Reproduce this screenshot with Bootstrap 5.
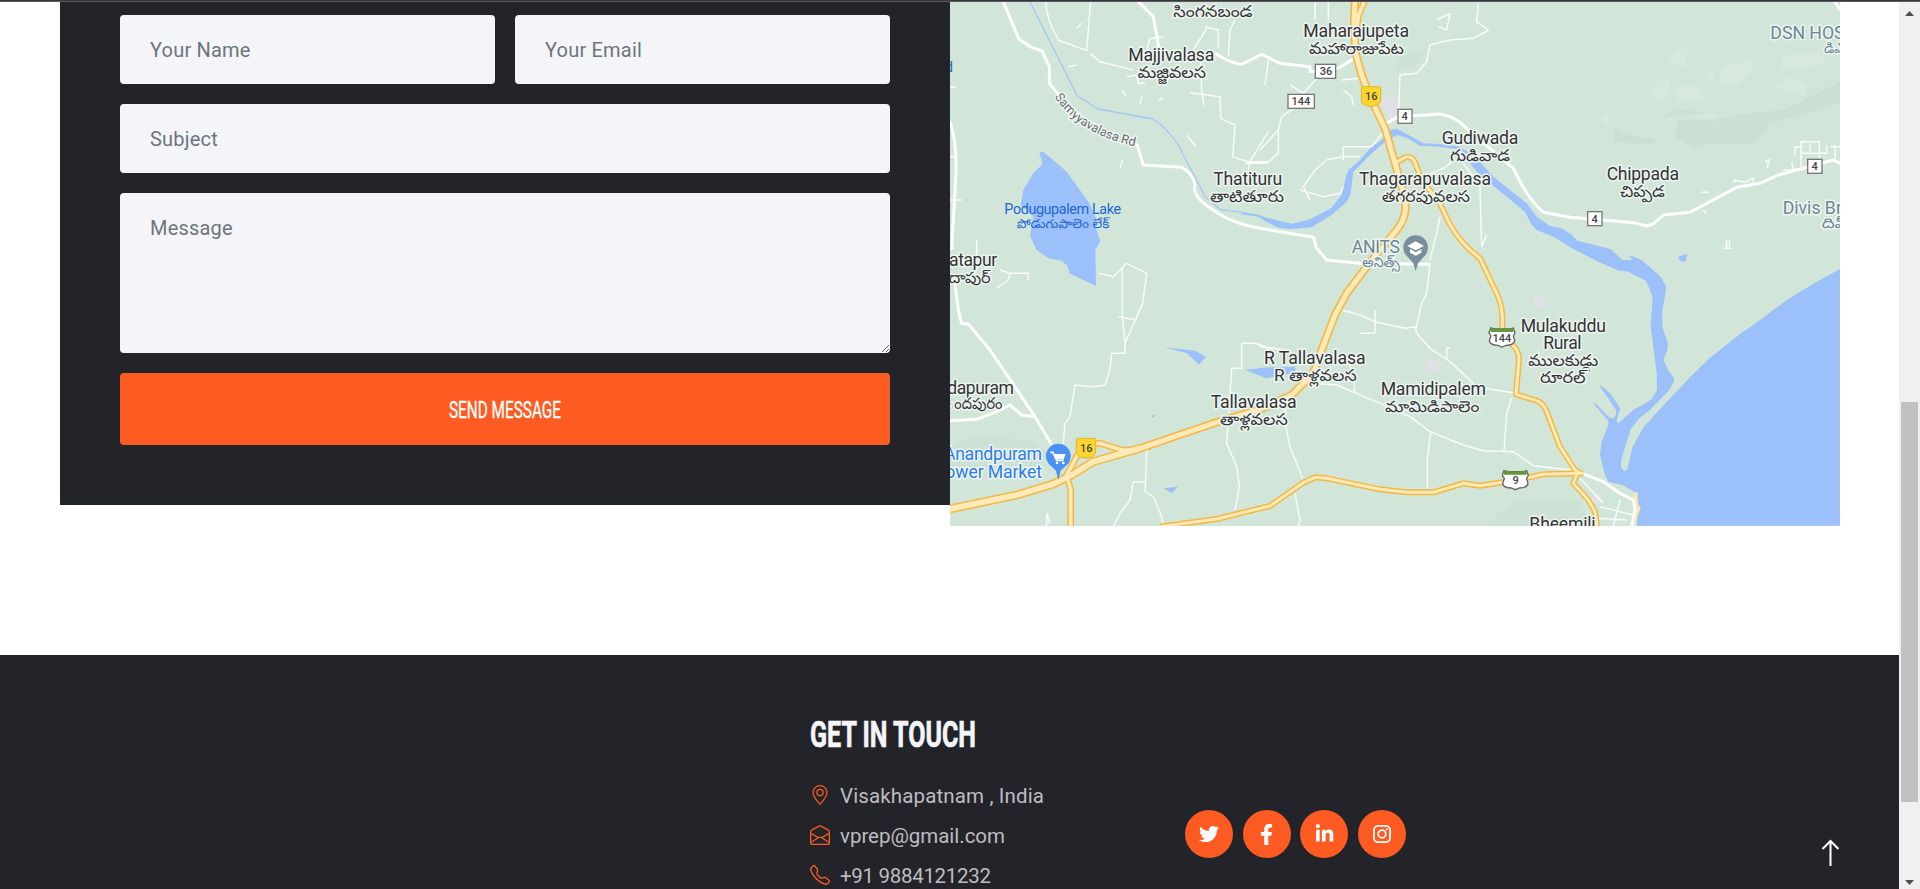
<!DOCTYPE html>
<html lang="en">
<head>
<meta charset="utf-8">
<title>Contact</title>
<meta name="viewport" content="width=device-width, initial-scale=1">
<link href="https://cdn.jsdelivr.net/npm/bootstrap@5.3.0/dist/css/bootstrap.min.css" rel="stylesheet">
<style>
:root{--accent:#fd5b21;--ink:#232429;--soft:#f4f5f9}
body{font-family:Roboto,"Liberation Sans",sans-serif;font-size:20px;height:889px}
.top-line{height:2px;flex:none;background:#38363b;border-bottom:1px solid #5d5b62}
.page-col{width:1899px}
.contact-row{padding:0 59px 0 60px;height:653px}
.form-side{width:890px;height:503px;padding:13px 60px 0;background:var(--ink)}
.form-side .form-control{background:var(--soft);border:0;border-radius:4px;padding:0 30px;height:69px;font-size:20px;letter-spacing:.2px;color:#6c757d}
.form-side .form-control::placeholder{color:#6c757d;opacity:1}
.form-side textarea.form-control{height:160px;padding-top:20px}
.form-gap{gap:20px}
.send-btn{height:72px;background:var(--accent);border:0;border-radius:4px;padding:0}
.send-btn svg,.foot svg{overflow:visible}
.map-side{width:890px;height:524px;overflow:hidden}
.foot{background:var(--ink);padding:58px 0 0 810px;height:234px;overflow:hidden}
.foot-col{width:374px}
.foot-line{height:40px;color:#bdbdc0}
.foot-line svg{color:var(--accent);flex:none}
.social-list{gap:9.5px;padding-top:97px;margin-left:1px}
.social{width:48px;height:48px;background:var(--accent)}
.to-top{left:1815px;top:837px}
.bar-side{width:21px;background:#f0f0f0}
.bar-side svg{flex:none;margin-top:9px}
.bar-thumb{flex:none;width:17px;height:400px;background:#c1c1c1;margin:386px 0 69px}
.mw path{fill:none;stroke:#fff;stroke-linejoin:round}
.thick path{stroke-width:9}
.thin path{stroke-width:4.5;opacity:.85}
.water{fill:#9cc0f9}
.case use,.fillr use{fill:none;stroke-linejoin:round}
.lab{font-family:Roboto,"Noto Sans Telugu",sans-serif;font-size:53px;fill:#333437;stroke:#eef5f0;stroke-width:9;paint-order:stroke;stroke-linejoin:round}
.te{font-size:47px}
.sh text{font-family:Roboto,sans-serif;font-size:33px;fill:#444;text-anchor:middle;font-weight:500}
.sh rect{fill:#fff;stroke:#777;stroke-width:4}
</style>
</head>
<body class="m-0 overflow-hidden d-flex flex-column">
<div class="top-line"></div>
<div class="d-flex flex-grow-1">
<main class="page-col">
  <section class="contact-row d-flex align-items-start bg-white">
    <form class="form-side form-gap d-flex flex-column">
      <div class="d-flex form-gap"><input class="form-control" placeholder="Your Name"><input class="form-control" placeholder="Your Email"></div>
      <input class="form-control" placeholder="Subject">
      <textarea class="form-control" placeholder="Message"></textarea>
      <button type="button" class="btn send-btn w-100 d-flex justify-content-center align-items-center">
        <svg width="112" height="30"><text x="0" y="24" font-size="24" fill="#fff" stroke="#fff" stroke-width=".35" textLength="112" lengthAdjust="spacingAndGlyphs">SEND MESSAGE</text></svg>
      </button>
    </form>
    <div class="map-side">
      <svg class="d-block" width="890" height="524" viewBox="0 6 2670 1572">
        <defs>
          <path id="nh" d="M1215 0L1212 70 1217 160 1235 225 1260 290 1305 385 1335 490 1355 560Q1368 600 1366 630Q1364 660 1340 690L1250 800 1190 880 1155 945 1115 1050 1090 1120 1025 1185 930 1228 790 1270 570 1345"/>
          <path id="nh2" d="M570 1345L430 1385 365 1425 310 1452 200 1485 0 1527"/>
          <path id="nh3" d="M600 1337L560 1350H515L450 1330 405 1330 380 1370 350 1425 362 1470V1580M1218 100L1226 45 1245 0"/>
          <path id="ea" d="M1335 490L1365 472Q1385 468 1394 485L1415 540 1470 610 1495 665 1520 705Q1550 745 1590 775L1640 880Q1655 910 1657 950V1010L1688 1035Q1708 1055 1707 1080L1698 1183 1760 1202Q1782 1210 1792 1240L1830 1340 1875 1410 1890 1420"/>
          <path id="r9" d="M630 1580L800 1557 890 1535 960 1518 1060 1448 1095 1432 1130 1435 1290 1468 1370 1477H1450L1540 1450 1590 1457 1700 1440 1780 1423 1900 1420"/>
          <path id="so" d="M1882 1420L1870 1450 1915 1500 1935 1535 1942 1580"/>
          <path id="samy" d="M314 290Q390 412 590 446"/>
        </defs>
        <rect width="2670" height="1580" fill="#d1e6d9"/>
        <!-- hills -->
        <g transform="translate(1860 0)">
          <path fill="#c9ddd0" d="M325 360L430 362 500 345 640 330 720 290 810 245V305L690 345 600 370 560 430 420 430 370 447 315 410ZM132 385L175 405 262 420 240 435 132 425ZM270 360L310 325 400 338 300 348Z" opacity=".8"/>
          <path fill="#d7e9dd" d="M290 180L325 148 356 148 345 205ZM235 280L265 240 303 240 300 280 268 308ZM315 262L375 257 417 288 385 305 320 303ZM402 220L430 205 438 250 415 245ZM455 200L550 180 545 215 490 262 448 255ZM632 210L640 165 770 160 760 190 690 210ZM610 260L660 230 710 250 705 290 660 275ZM90 355L115 335 115 380ZM360 350L440 340 440 355Z"/>
        </g>
        <path fill="#c9ddd0" opacity=".6" d="M1600 1578L1700 1500 1880 1500 1930 1578ZM0 1340L70 1310 230 1320 300 1360 260 1410H0ZM1330 215L1350 170 1430 150 1400 195Z"/>
        <path fill="#e0e1e6" d="M1290 300L1325 290 1345 298 1348 340 1340 362 1320 365ZM1750 885L1765 880 1784 900 1780 926 1755 920ZM1432 1085L1455 1077 1475 1087 1460 1118 1430 1112ZM1920 1495L1940 1480 1960 1505 1945 1515Z"/>
        <!-- water -->
        <g class="water">
          <path transform="translate(-30 0)" d="M298 458L308 454 380 515 445 605 455 625 470 660 470 690 481 724 466 750 468 858 388 820 383 798 365 782 325 775 290 750 270 708 280 650 242 615 250 570 280 520 308 492ZM905 635L960 645 995 663V668L955 650 905 643Z"/>
          <path d="M642 1042L735 1052 768 1070 747 1094 711 1060ZM885 1110L935 1103 1035 1100 1038 1118 948 1135ZM642 1465L684 1460 665 1480ZM602 1247L614 1244 612 1253ZM2185 770L2212 762 2205 787 2187 780Z"/>
          <path transform="translate(930 0)" d="M0 648L95 671 150 658 215 623 245 585 258 530 265 510 300 480 330 445 378 410 392 390 410 386 440 402 490 430 540 432 600 440 645 470 700 530 800 610 830 650 870 678 905 685 932 702V742L880 710 830 690 812 670 795 635 700 558 650 515 620 475 590 447 540 440 480 437 440 413 410 405 375 425 330 465 280 515 272 580 262 604 215 645 155 682 90 688 50 682 0 655Z"/>
          <path transform="translate(1860 0)" d="M0 700L22 722 95 740 123 748 165 788 187 778 175 765 205 775 248 812H148L85 785 0 742Z"/>
          <path transform="translate(1860 780)" d="M810 27L735 68 650 120 550 195 515 218 418 295 360 352 290 425 220 502 188 560 172 628 163 634 153 622 154 598 172 540 182 508 208 475 240 450 300 388 313 360 310 350 297 335 280 300 293 268 293 245 278 205 276 155 283 120 289 80 272 50 215 0H80L180 38 228 62 248 110 242 200 250 260 260 340 261 390 245 418 190 450 145 490 140 480 151 445 120 400 95 378 88 377 115 415 138 450 138 465 130 475 118 473 75 428 72 432 113 480 116 492 95 545 90 585 105 645 115 665 157 675 195 697 205 720 200 797H810Z"/>
        </g>
        <path fill="none" stroke="#a5c8f5" stroke-width="4" d="M237 0L382 288 445 327 610 357Q650 385 682 430L765 590 810 628 880 638"/>
        <path fill="#fbe7b4" d="M2050 1480L2063 1475 2062 1510 2072 1523 2053 1578H2045L2052 1530Z"/>
        <!-- local roads -->
        <g class="mw thin">
          <path d="M287 5Q290 60 325 120L410 152 422 5M420 160L450 185 550 210M590 150L600 115 640 110M530 230L560 225 565 250 585 250M770 85L730 150M765 80L805 90V145M855 60L840 90 835 170M752 190L755 270 762 315M720 278L810 290 812 355 855 375 848 470 895 485H960M955 395L900 485 895 510M1095 5V60M1135 5V60M945 255L955 180M1020 255L1060 280 1105 230M885 490H950L985 460V390L995 350 1040 320M985 390L930 450M1080 600L1060 560 1095 510 1130 480 1175 470H1230M1050 570L1120 590 1170 580 1180 560M1300 395L1265 440H1180V480M1175 240L1230 235M1180 270L1205 290 1210 315M1345 360L1350 225 1400 220 1430 185 1440 135 1500 120 1570 115 1615 90 1580 65 1585 10M1460 60L1500 40 1490 90 1465 80M1420 530L1480 505 1530 470M1540 490L1590 560 1595 740 1610 705M1470 650L1460 700 1440 780"/>
          <path d="M380 85L395 70M355 200L380 195M515 270L530 290M570 310L575 290M625 300L640 295M710 405L738 440M510 505L518 480M0 262H20M0 470H15M0 600H35M80 720V770M150 810L180 820 175 840 140 865M175 820H235V840M445 820L490 830 530 790 590 820 578 910 525 1030V1060H485L480 1110 465 1155 430 1160 375 1155 360 1250 345 1270 338 1350M517 800V950L525 1030M505 950L560 960M590 1350L587 1440 585 1475 610 1490 635 1550 640 1580M585 1445H550L540 1500 510 1540 490 1578M290 1578V1540L300 1570M875 1030H915L960 1045M875 1030V1105H845L830 1330 860 1400 868 1460 855 1530M1005 1185V1270L1020 1340 1058 1435M1035 1480L1050 1560 1045 1580"/>
          <path d="M930 1040L1010 1050 1080 1090M1175 930L1230 945 1275 965 1365 985 1395 980 1400 1000 1440 1045 1500 1085 1570 1150M1275 1000V930M1230 1000H1275M1440 790L1430 880 1415 910 1397 990M1490 1080V1045H1500M1095 1150L1160 1155 1290 1210 1380 1250 1440 1295 1540 1335 1600 1352 1690 1355 1750 1397 1880 1412M1600 1165L1690 1178M1685 1195L1670 1240 1662 1355M1442 1295L1432 1380V1465M1195 1090L1210 1115 1215 1180M2355 548L2352 540 2385 547 2410 533V548M2553 500V425H2608V500M2553 460H2630V435M2535 440H2560M2535 465V440M2580 430V455M2640 440H2670M2655 435V475M2500 510H2560M2525 485L2530 510M2445 480L2455 488 2452 505M2455 488L2460 475M2255 577H2275M2320 745H2345M2330 720V745M2338 720V745M2260 630L2270 642"/>
          <path d="M1890 1435L1960 1510M1950 1520L2050 1545M1935 1555L2030 1560M2010 1500L1990 1578"/>
        </g>
        <g class="mw thick">
          <path d="M160 5L207 118 245 142 275 152 298 200V250L330 290M560 430L580 495 695 502Q730 520 735 555Q725 590 790 630Q850 675 960 690L1090 712 1100 745 1130 780 1230 790 1440 793M565 5L610 50 627 145M795 160Q840 190 875 193L935 163 990 190 1080 200V215L1165 205 1220 170M1275 320L1310 370 1345 350 1470 342Q1520 350 1555 390L1690 505Q1735 600 1780 637L1860 652 1960 660 2050 668 2090 678 2110 672 2140 645 2220 637 2360 562 2430 550 2485 525 2610 490 2650 480 2672 490M2650 0L2672 30"/>
          <path d="M0 365Q20 420 18 520L5 750M15 850L25 930 35 970 55 972 120 1050 255 1250 270 1275 305 1335M0 1262L80 1258 140 1235 180 1215 215 1245 255 1250"/>
          <path d="M1890 1418L1960 1445 2010 1480 2050 1500 2055 1530 2045 1578"/>
        </g>
        <g class="case" stroke="#f2b942">
          <use href="#nh3" stroke-width="20"/><use href="#ea" stroke-width="18"/><use href="#r9" stroke-width="18"/><use href="#so" stroke-width="17"/><use href="#nh" stroke-width="25"/><use href="#nh2" stroke-width="26"/>
        </g>
        <g class="fillr" stroke="#ffe9b8">
          <use href="#nh3" stroke-width="11"/><use href="#ea" stroke-width="9"/><use href="#r9" stroke-width="9"/><use href="#so" stroke-width="8"/><use href="#nh" stroke-width="15"/><use href="#nh2" stroke-width="17"/>
        </g>
        <!-- road shields -->
        <g class="sh">
          <rect x="1096" y="193" width="61" height="42"/><text x="1128" y="225">36</text>
          <rect x="1014" y="283" width="79" height="42"/><text x="1053" y="315">144</text>
          <rect x="1344" y="328" width="42" height="42"/><text x="1364" y="360">4</text>
          <rect x="1913" y="635" width="43" height="42"/><text x="1934" y="668">4</text>
          <rect x="2573" y="478" width="43" height="42"/><text x="2594" y="511">4</text>
          <path id="ys" d="M1240 260H1287Q1292 260 1292 266V305L1283 315 1263 320 1243 315 1234 305V266Q1234 260 1240 260Z" fill="#fcd62e" stroke="#e0b52a" stroke-width="3"/><text x="1264" y="301">16</text>
          <use href="#ys" x="-855" y="275" transform="translate(0 780)" opacity="1"/><text x="409" y="1355">16</text>
          <g id="us"><path d="M1622 984L1634 987H1680L1690 984 1695 998 1690 1008 1694 1022Q1692 1036 1668 1036L1656 1041 1644 1036Q1620 1036 1618 1022L1623 1008 1617 998Z" fill="#fff" stroke="#666" stroke-width="4"/><path d="M1622 984L1656 987 1690 984V996H1622Z" fill="#5f9938"/></g><text x="1656" y="1025">144</text>
          <use href="#us" x="40" y="428"/><text x="1697" y="1452">9</text>
        </g>
        <!-- place pins -->
        <path d="M1397 814L1390 790 1368 766A37 37 0 1 1 1426 766L1404 790Z" fill="#78909c"/>
        <path d="M1372 738L1397 724 1422 738 1397 751ZM1380 747L1397 757 1414 747V758L1397 767 1380 758Z" fill="#fff"/>
        <path d="M325 1440L318 1412 296 1391A37 37 0 1 1 354 1391L332 1412Z" fill="#4a90f5"/>
        <path d="M301 1357H309L320 1381H341" fill="none" stroke="#fff" stroke-width="5"/><path d="M312 1362H347L341 1378H319Z" fill="#fff"/><circle cx="321" cy="1389" r="4" fill="#fff"/><circle cx="340" cy="1389" r="4" fill="#fff"/>
        <!-- labels -->
        <g class="lab">
          <text x="535" y="183" textLength="258">Majjivalasa</text><text x="1060" y="112" textLength="317">Maharajupeta</text>
          <text x="1475" y="431" textLength="230">Gudiwada</text><text x="1227" y="556" textLength="396">Thagarapuvalasa</text>
          <text x="790" y="556" textLength="207">Thatituru</text><text x="1970" y="541" textLength="217">Chippada</text>
          <text x="-3" y="799" textLength="145">atapur</text><text x="-8" y="1181" textLength="200">dapuram</text>
          <text x="782" y="1224" textLength="258">Tallavalasa</text><text x="942" y="1093" textLength="305">R Tallavalasa</text>
          <text x="1292" y="1186" textLength="316">Mamidipalem</text><text x="1712" y="995" textLength="256">Mulakuddu</text>
          <text x="1780" y="1046" textLength="115">Rural</text><text x="1738" y="1591" textLength="199">Bheemili</text>
          <g fill="#6c8795"><text x="1205" y="759" textLength="145">ANITS</text><text x="2461" y="116">DSN HOS</text><text x="2498" y="641">Divis Br</text></g>
          <g fill="#2b7de9"><text x="-18" y="1381" textLength="294">Anandpuram</text><text x="-14" y="1434" textLength="290">ower Market</text></g>
          <g fill="#1f67cf" stroke="none"><text x="163" y="641" style="font-size:43px" textLength="350">Podugupalem Lake</text><text x="-16" y="215" style="font-size:44px">d</text></g>
          <text style="font-size:38px" fill="#666a6c"><textPath href="#samy" textLength="290">Samyyavalasa Rd</textPath></text>
        </g>
        <g class="lab te">
          <text x="670" y="50" textLength="238" lengthAdjust="spacingAndGlyphs">సింగనబండ</text>
          <text x="563" y="235" textLength="205" lengthAdjust="spacingAndGlyphs">మజ్జివలస</text>
          <text x="1077" y="163" textLength="285" lengthAdjust="spacingAndGlyphs">మహారాజుపేట</text>
          <text x="1500" y="484" textLength="180" lengthAdjust="spacingAndGlyphs">గుడివాడ</text>
          <text x="1295" y="607" textLength="265" lengthAdjust="spacingAndGlyphs">తగరపువలస</text>
          <text x="780" y="607" textLength="222" lengthAdjust="spacingAndGlyphs">తాటితూరు</text>
          <text x="2010" y="592" textLength="135" lengthAdjust="spacingAndGlyphs">చిప్పడ</text>
          <text x="-4" y="850" textLength="126" lengthAdjust="spacingAndGlyphs">దాపుర్</text>
          <text x="-12" y="1228" textLength="169" lengthAdjust="spacingAndGlyphs">ందపురం</text>
          <text x="810" y="1275" textLength="203" lengthAdjust="spacingAndGlyphs">తాళ్లవలస</text>
          <text x="972" y="1142" textLength="248" lengthAdjust="spacingAndGlyphs">R తాళ్లవలస</text>
          <text x="1305" y="1237" textLength="283" lengthAdjust="spacingAndGlyphs">మామిడిపాలెం</text>
          <text x="1735" y="1097" textLength="210" lengthAdjust="spacingAndGlyphs">ములకుడ్డు</text>
          <text x="1770" y="1148" textLength="137" lengthAdjust="spacingAndGlyphs">రూరల్</text>
          <g fill="#6c8795" style="font-size:42px"><text x="1237" y="800" textLength="113" lengthAdjust="spacingAndGlyphs">అనిత్స్</text><text x="2622" y="158" textLength="90" lengthAdjust="spacingAndGlyphs">డిఎస్</text><text x="2615" y="685" textLength="78" lengthAdjust="spacingAndGlyphs">దివీ</text></g>
          <text fill="#1f67cf" stroke="none" style="font-size:38px" x="200" y="684" textLength="278" lengthAdjust="spacingAndGlyphs">పోడుగుపాలెం లేక్</text>
        </g>
      </svg>
    </div>
  </section>
  <footer class="foot d-flex">
    <div class="foot-col">
      <svg class="d-block" width="170" height="62"><text x="0" y="33.500" font-size="36" font-weight="700" fill="#f4f5f9" stroke="#f4f5f9" stroke-width=".7" textLength="166" lengthAdjust="spacingAndGlyphs">GET IN TOUCH</text></svg>
      <div class="foot-line d-flex align-items-center"><svg width="20" height="20" viewBox="0 0 16 16" fill="currentColor"><path d="M12.166 8.94c-.524 1.062-1.234 2.12-1.96 3.07A31.493 31.493 0 0 1 8 14.58a31.481 31.481 0 0 1-2.206-2.57c-.726-.95-1.436-2.008-1.96-3.07C3.304 7.867 3 6.862 3 6a5 5 0 0 1 10 0c0 .862-.305 1.867-.834 2.94zM8 16s6-5.686 6-10A6 6 0 0 0 2 6c0 4.314 6 10 6 10z"/><path d="M8 8a2 2 0 1 1 0-4 2 2 0 0 1 0 4zm0 1a3 3 0 1 0 0-6 3 3 0 0 0 0 6z"/></svg><svg width="216" height="28"><text x="10" y="22" font-size="20.500" fill="#bdbdc0" textLength="204">Visakhapatnam , India</text></svg></div>
      <div class="foot-line d-flex align-items-center"><svg width="20" height="20" viewBox="0 0 16 16" fill="currentColor"><path d="M8.47 1.318a1 1 0 0 0-.94 0l-6 3.2A1 1 0 0 0 1 5.4v.817l5.75 3.45L8 8.917l1.25.75L15 6.217V5.4a1 1 0 0 0-.53-.882l-6-3.2ZM15 7.383l-4.778 2.867L15 13.117V7.383Zm-.035 6.88L8 10.082l-6.965 4.18A1 1 0 0 0 2 15h12a1 1 0 0 0 .965-.738ZM1 13.116l4.778-2.867L1 7.383v5.734ZM7.059.435a2 2 0 0 1 1.882 0l6 3.2A2 2 0 0 1 16 5.4V14a2 2 0 0 1-2 2H2a2 2 0 0 1-2-2V5.4a2 2 0 0 1 1.059-1.765l6-3.2Z"/></svg><svg width="216" height="28"><text x="10" y="22" font-size="20.500" fill="#bdbdc0" textLength="165">vprep@gmail.com</text></svg></div>
      <div class="foot-line d-flex align-items-center"><svg width="20" height="20" viewBox="0 0 16 16" fill="currentColor"><path d="M3.654 1.328a.678.678 0 0 0-1.015-.063L1.605 2.3c-.483.484-.661 1.169-.45 1.77a17.568 17.568 0 0 0 4.168 6.608 17.569 17.569 0 0 0 6.608 4.168c.601.211 1.286.033 1.77-.45l1.034-1.034a.678.678 0 0 0-.063-1.015l-2.307-1.794a.678.678 0 0 0-.58-.122l-2.19.547a1.745 1.745 0 0 1-1.657-.459L5.482 8.062a1.745 1.745 0 0 1-.46-1.657l.548-2.19a.678.678 0 0 0-.122-.58L3.654 1.328zM1.884.511a1.745 1.745 0 0 1 2.612.163L6.29 2.98c.329.423.445.974.315 1.494l-.547 2.19a.678.678 0 0 0 .178.643l2.457 2.457a.678.678 0 0 0 .644.178l2.189-.547a1.745 1.745 0 0 1 1.494.315l2.306 1.794c.829.645.905 1.87.163 2.611l-1.034 1.034c-.74.74-1.846 1.065-2.877.702a18.634 18.634 0 0 1-7.01-4.42 18.634 18.634 0 0 1-4.42-7.009c-.362-1.03-.037-2.137.703-2.877L1.885.511z"/></svg><svg width="216" height="28"><text x="10" y="22" font-size="20.500" fill="#bdbdc0" textLength="151">+91 9884121232</text></svg></div>
    </div>
    <div class="social-list d-flex">
      <a class="social rounded-circle d-flex align-items-center justify-content-center"><svg width="20" height="20" viewBox="0 0 512 512" fill="#fff"><path d="M459.37 151.716c.325 4.548.325 9.097.325 13.645 0 138.72-105.583 298.558-298.558 298.558-59.452 0-114.68-17.219-161.137-47.106 8.447.974 16.568 1.299 25.34 1.299 49.055 0 94.213-16.568 130.274-44.832-46.132-.975-84.792-31.188-98.112-72.772 6.498.974 12.995 1.624 19.818 1.624 9.421 0 18.843-1.3 27.614-3.573-48.081-9.747-84.143-51.98-84.143-102.985v-1.299c13.969 7.797 30.214 12.67 47.431 13.319-28.264-18.843-46.781-51.005-46.781-87.391 0-19.492 5.197-37.36 14.294-52.954 51.655 63.675 129.3 105.258 216.365 109.807-1.624-7.797-2.599-15.918-2.599-24.04 0-57.828 46.782-104.934 104.934-104.934 30.213 0 57.502 12.67 76.67 33.137 23.715-4.548 46.456-13.32 66.599-25.34-7.798 24.366-24.366 44.833-46.132 57.827 21.117-2.273 41.584-8.122 60.426-16.243-14.292 20.791-32.161 39.308-52.628 54.253z"/></svg></a>
      <a class="social rounded-circle d-flex align-items-center justify-content-center"><svg width="13" height="21" viewBox="0 0 320 512" fill="#fff"><path d="M279.14 288l14.22-92.66h-88.91v-60.13c0-25.35 12.42-50.06 52.24-50.06h40.42V6.26S260.43 0 225.36 0c-73.22 0-121.08 44.38-121.08 124.72v70.62H22.89V288h81.39v224h100.17V288z"/></svg></a>
      <a class="social rounded-circle d-flex align-items-center justify-content-center"><svg width="19" height="20" viewBox="0 0 448 512" fill="#fff"><path d="M100.28 448H7.4V148.9h92.88zM53.79 108.1C24.09 108.1 0 83.5 0 53.8a53.79 53.79 0 0 1 107.58 0c0 29.7-24.1 54.3-53.79 54.3zM447.9 448h-92.68V302.4c0-34.7-.7-79.2-48.29-79.2-48.29 0-55.69 37.7-55.69 76.7V448h-92.78V148.9h89.08v40.8h1.3c12.4-23.5 42.69-48.3 87.88-48.3 94 0 111.28 61.9 111.28 142.3V448z"/></svg></a>
      <a class="social rounded-circle d-flex align-items-center justify-content-center"><svg width="18" height="18" viewBox="0 0 18 18" fill="none" stroke="#fff" stroke-width="1.8"><rect x=".9" y=".9" width="16.2" height="16.2" rx="4.4"/><circle cx="9" cy="9" r="3.8"/><circle cx="13.8" cy="4.3" r="1.1" fill="#fff" stroke="none"/></svg></a>
    </div>
  </footer>
</main>
<aside class="bar-side d-flex flex-column align-items-center">
  <svg width="9" height="5"><path d="M0 5L4.5 0 9 5Z" fill="#505050"/></svg>
  <div class="bar-thumb"></div>
  <svg width="9" height="5"><path d="M0 0H9L4.5 5Z" fill="#505050"/></svg>
</aside>
</div>
<a class="to-top position-absolute"><svg class="d-block" width="32" height="32" viewBox="0 0 32 32" fill="none" stroke="#fff" stroke-width="2"><path d="M15.500 29V4M7.500 12L15.500 4 23.500 12"/></svg></a>
<script src="https://cdn.jsdelivr.net/npm/bootstrap@5.3.0/dist/js/bootstrap.bundle.min.js"></script>
</body>
</html>
